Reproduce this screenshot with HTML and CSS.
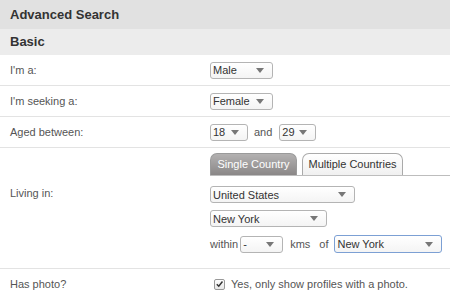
FILE: index.html
```html
<!DOCTYPE html>
<html>
<head>
<meta charset="utf-8">
<link rel="stylesheet" href="styles.css">
</head>
<body>
<div class="page">
  <div class="title">Advanced Search</div>
  <div class="section">Basic</div>

  <div class="row">
    <div class="label">I'm a:</div>
    <div class="value">
      <div class="sel w63"><span>Male</span><i class="arrow"></i></div>
    </div>
  </div>

  <div class="row">
    <div class="label">I'm seeking a:</div>
    <div class="value">
      <div class="sel w63"><span>Female</span><i class="arrow"></i></div>
    </div>
  </div>

  <div class="row">
    <div class="label">Aged between:</div>
    <div class="value inline">
      <div class="sel w38"><span>18</span><i class="arrow"></i></div>
      <span class="txt and">and</span>
      <div class="sel w37"><span>29</span><i class="arrow"></i></div>
    </div>
  </div>

  <div class="row living">
    <div class="label">Living in:</div>
    <div class="value stack">
      <div class="tabs">
        <div class="tab active">Single Country</div>
        <div class="tab">Multiple Countries</div>
      </div>
      <div class="sel w145"><span>United States</span><i class="arrow"></i></div>
      <div class="sel w117"><span>New York</span><i class="arrow"></i></div>
      <div class="inline within">
        <span class="txt">within</span>
        <div class="sel w43"><span>-</span><i class="arrow"></i></div>
        <span class="txt kms">kms</span>
        <span class="txt of">of</span>
        <div class="sel w108 focus"><span>New York</span><i class="arrow"></i></div>
      </div>
    </div>
  </div>

  <div class="row last">
    <div class="label">Has photo?</div>
    <div class="value inline">
      <span class="check">
        <svg width="10" height="10" viewBox="0 0 10 10"><path d="M2 5.2 L4.2 7.5 L8.3 2.2" fill="none" stroke="#333" stroke-width="1.6"/></svg>
      </span>
      <span class="txt">Yes, only show profiles with a photo.</span>
    </div>
  </div>
</div>
</body>
</html>
```

FILE: styles.css
```css
html, body {
  margin: 0;
  padding: 0;
  background: #fff;
}
body {
  font-family: "Liberation Sans", Arial, sans-serif;
  font-size: 11px;
  color: #555;
  width: 450px;
  height: 299px;
  overflow: hidden;
}
.title {
  height: 29px;
  line-height: 29px;
  background: #e1e1e1;
  padding-left: 10px;
  font-size: 13px;
  font-weight: bold;
  color: #333;
}
.section {
  height: 26px;
  line-height: 26px;
  background: #ececec;
  padding-left: 10px;
  font-size: 13px;
  font-weight: bold;
  color: #333;
}
.row {
  display: grid;
  grid-template-columns: 200px 240px;
  align-items: center;
  padding-left: 10px;
  height: 30px;
  border-bottom: 1px solid #e3e3e3;
}
.row.last {
  border-bottom: none;
}
.row.living {
  height: 120px;
  align-items: start;
}
.row.living .label {
  margin-top: 39px;
}
.value {
  display: flex;
  align-items: center;
}
.inline {
  display: flex;
  align-items: center;
}
.stack {
  flex-direction: column;
  align-items: flex-start;
  padding-top: 5px;
}
.sel {
  box-sizing: border-box;
  height: 17px;
  border: 1px solid #b4b4b4;
  border-radius: 3px;
  background: linear-gradient(#ffffff, #f4f4f4);
  display: flex;
  align-items: center;
  justify-content: space-between;
  padding: 0 8px 0 2px;
  color: #333;
  font-size: 11px;
  white-space: nowrap;
}
.sel .arrow {
  width: 0;
  height: 0;
  border-left: 4px solid transparent;
  border-right: 4px solid transparent;
  border-top: 5px solid #777;
}
.sel.focus {
  border-color: #7ca0d4;
  height: 18px;
}
.w63 { width: 63px; }
.w38 { width: 38px; }
.w37 { width: 37px; }
.w145 { width: 145px; }
.w117 { width: 117px; }
.w43 { width: 43px; }
.w108 { width: 108px; }
.txt {
  color: #555;
  white-space: nowrap;
}
.and {
  margin: 0 7px 0 6px;
}
.tabs {
  display: flex;
  align-items: flex-end;
  gap: 5px;
  width: 240px;
  border-bottom: 1px solid #bdbdbd;
  margin-bottom: 10px;
}
.tab {
  box-sizing: border-box;
  height: 22px;
  line-height: 21px;
  text-align: center;
  white-space: nowrap;
  border: 1px solid #aaa;
  border-bottom: none;
  border-radius: 7px 7px 0 0;
  background: linear-gradient(#ffffff, #f0f0f0);
  color: #333;
  width: 101px;
}
.tab.active {
  background: linear-gradient(#b3b1b1, #8a8787);
  border-color: #9a9a9a;
  color: #fff;
  width: 87px;
}
.stack > .sel + .sel {
  margin-top: 7px;
}
.within {
  margin-top: 8px;
}
.within .sel.w43 {
  margin-left: 2px;
}
.kms {
  margin-left: 7px;
}
.of {
  margin-left: 9px;
  margin-right: 6px;
}
.check {
  box-sizing: border-box;
  width: 11px;
  height: 11px;
  margin-left: 4px;
  margin-right: 6px;
  border: 1px solid #999;
  border-radius: 2px;
  background: linear-gradient(#fdfdfd, #e8e8e8);
  display: flex;
  align-items: center;
  justify-content: center;
}
.check svg {
  display: block;
}
```
